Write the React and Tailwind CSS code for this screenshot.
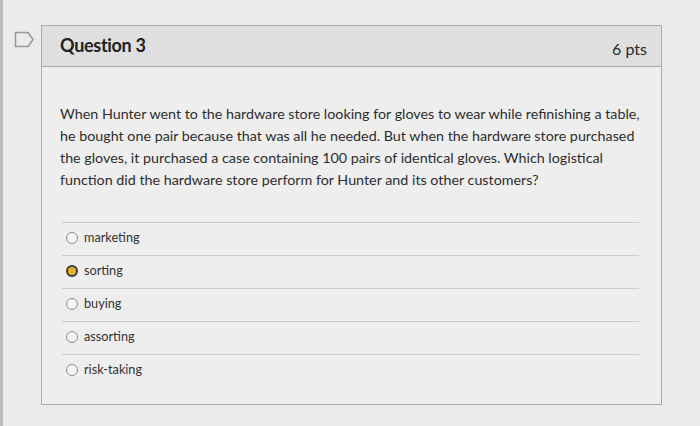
const options = [
	{ label: "marketing", selected: false },
	{ label: "sorting", selected: true },
	{ label: "buying", selected: false },
	{ label: "assorting", selected: false },
	{ label: "risk-taking", selected: false },
];

const questionLines = [
	"When Hunter went to the hardware store looking for gloves to wear while refinishing a table,",
	"he bought one pair because that was all he needed. But when the hardware store purchased",
	"the gloves, it purchased a case containing 100 pairs of identical gloves. Which logistical",
	"function did the hardware store perform for Hunter and its other customers?",
];

const BookmarkIcon = () => (
	<svg width="21" height="17" viewBox="0 0 21 17" fill="none">
		<path
			d="M1.5 1.5h12.5l5 7-5 7H1.5z"
			stroke="#9a9a9a"
			strokeWidth="1.6"
			strokeLinejoin="round"
		/>
	</svg>
);

const Radio = ({ selected }) =>
	selected ? (
		<span className="block w-[12px] h-[12px] rounded-full border-2 border-[#3a3a3a] bg-[#e4b52c]" />
	) : (
		<span className="block w-[12px] h-[12px] rounded-full border border-[#8c8c8c] bg-[#f5f5f5]" />
	);

export default function App() {
	return (
		<div
			className="w-[700px] h-[426px] overflow-hidden bg-[#ebebeb] border-l-[3px] border-[#bdbdbd] flex flex-row pt-[25px]"
			style={{ fontFamily: "Lato, 'Open Sans', sans-serif" }}
		>
			<div className="w-[38px] flex justify-end pr-[6px] pt-[6px]">
				<BookmarkIcon />
			</div>

			<div className="w-[621px] h-[380px] border border-[#ababab] bg-[#eeeeee] flex flex-col">
				<div className="h-[41px] shrink-0 bg-[#dfdfdf] border-b border-[#ababab] flex flex-row items-center justify-between pl-[18px] pr-[14px]">
					<span className="text-[18px] font-bold text-[#222222] tracking-[-0.3px] pb-[2px]">
						Question 3
					</span>
					<span className="text-[16px] text-[#2a2a2a] pt-[6px]">6 pts</span>
				</div>

				<div className="pl-[18px] pt-[36px] text-[14.3px] leading-[22px] text-[#2d2d2d]">
					{questionLines.map((line, i) => (
						<div key={i} className="whitespace-nowrap">
							{line}
						</div>
					))}
				</div>

				<div className="ml-[20px] mr-[22px] mt-[31px] flex flex-col">
					{options.map((opt) => (
						<div
							key={opt.label}
							className="h-[33px] border-t border-[#cbcbcb] flex flex-row items-center pl-[4px] pb-[3px] gap-[6px]"
						>
							<Radio selected={opt.selected} />
							<span className="text-[12.7px] text-[#333333]">{opt.label}</span>
						</div>
					))}
				</div>
			</div>
		</div>
	);
}
